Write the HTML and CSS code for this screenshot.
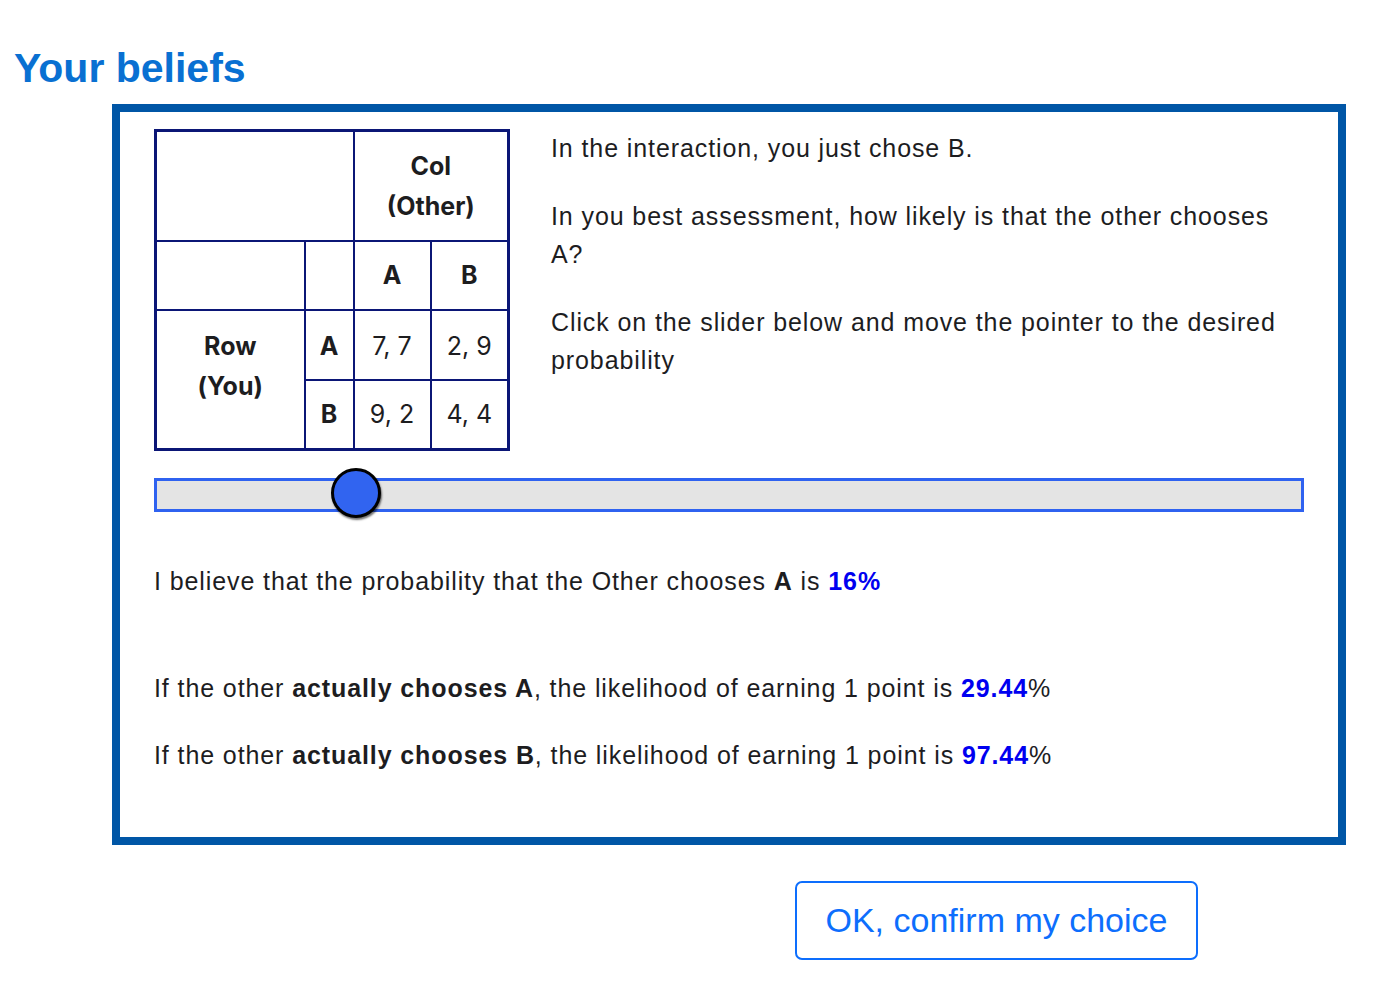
FILE: index.html
```html
<!DOCTYPE html>
<html lang="en">
<head>
<meta charset="utf-8">
<title>Your beliefs</title>
<link rel="stylesheet" href="styles.css">
</head>
<body>
<h1 class="title">Your beliefs</h1>
<section class="panel">
  <div class="top">
    <table class="game">
      <colgroup>
        <col class="c1"><col class="c2"><col class="c3"><col class="c4">
      </colgroup>
      <tr class="r1">
        <td colspan="2"></td>
        <td colspan="2" class="b">Col<br>(Other)</td>
      </tr>
      <tr class="r2">
        <td></td><td></td>
        <td class="b">A</td><td class="b">B</td>
      </tr>
      <tr class="r3">
        <td rowspan="2" class="b base">Row<br>(You)</td>
        <td class="b base">A</td><td class="base">7, 7</td><td class="base">2, 9</td>
      </tr>
      <tr class="r4">
        <td class="b">B</td><td>9, 2</td><td>4, 4</td>
      </tr>
    </table>
    <div class="info">
      <p>In the interaction, you just chose B.</p>
      <p>In you best assessment, how likely is that the other chooses A?</p>
      <p>Click on the slider below and move the pointer to the desired probability</p>
    </div>
  </div>
  <div class="slider">
    <div class="thumb" style="left: calc((100% - 50px) * 0.16 - 1px)"></div>
  </div>
  <p class="belief">I believe that the probability that the Other chooses <b>A</b> is <b class="val">16%</b></p>
  <p class="out first">If the other <b>actually chooses A</b>, the likelihood of earning 1 point is <b class="val">29.44</b>%</p>
  <p class="out">If the other <b>actually chooses B</b>, the likelihood of earning 1 point is <b class="val">97.44</b>%</p>
</section>
<div class="actions">
  <button class="confirm" type="button">OK, confirm my choice</button>
</div>
</body>
</html>
```
FILE: styles.css
```css
html, body {
  margin: 0;
  padding: 0;
  background: #ffffff;
}
body {
  font-family: "Liberation Sans", Arial, sans-serif;
  color: #1d1d1f;
}
.title {
  margin: 45px 0 12px 0;
  padding-left: 14px;
  font-size: 41px;
  line-height: 47px;
  font-weight: 700;
  color: #0970d2;
}
.panel {
  box-sizing: border-box;
  margin-left: 112px;
  width: 1234px;
  height: 741px;
  border: 8px solid #0056a6;
  padding: 17px 34px 0 34px;
}
.top {
  display: flex;
  gap: 41px;
  align-items: flex-start;
}
.game {
  border-collapse: collapse;
  border: 3px solid #0b1676;
  font-family: Inter, "Noto Sans", sans-serif;
  font-size: 25px;
  line-height: 40px;
  color: #1d1d1f;
  table-layout: fixed;
  width: 356px;
  flex: none;
}
.game .c1 { width: 149px; }
.game .c2 { width: 49px; }
.game .c3 { width: 77px; }
.game .c4 { width: 78px; }
.game td {
  border: 2px solid #0b1676;
  padding: 0;
  text-align: center;
  vertical-align: middle;
}
.game td.base {
  vertical-align: baseline;
  padding-top: 15px;
}
.game td.b { font-weight: 700; }
.game .r1 { height: 110px; }
.game .r2 { height: 69px; }
.game .r3 { height: 70px; }
.game .r4 { height: 70px; }
.info {
  flex: 1;
  font-size: 25px;
  letter-spacing: 0.9px;
  line-height: 38px;
}
.info p {
  margin: 0 0 30px 0;
}
.slider {
  position: relative;
  margin-top: 27px;
  height: 34px;
  box-sizing: border-box;
  border: 3px solid #2f62f0;
  background: #e4e4e4;
}
.thumb {
  position: absolute;
  top: -13px;
  width: 50px;
  height: 50px;
  box-sizing: border-box;
  border-radius: 50%;
  border: 3px solid #000000;
  background: #3164f0;
  box-shadow: 1px 2px 2px rgba(0, 0, 0, 0.55);
}
.belief, .out {
  margin: 0;
  font-size: 25px;
  letter-spacing: 0.9px;
  line-height: 38px;
}
.belief { margin-top: 50px; }
.out.first { margin-top: 69px; }
.out + .out { margin-top: 29px; }
.val { color: #0000f0; }
.actions {
  margin: 36px 0 0 795px;
}
.confirm {
  box-sizing: border-box;
  width: 403px;
  height: 79px;
  border: 2px solid #0d6efd;
  border-radius: 7px;
  background: #ffffff;
  color: #0d6efd;
  font-family: "Liberation Sans", Arial, sans-serif;
  font-size: 34px;
  padding: 0;
}
```
